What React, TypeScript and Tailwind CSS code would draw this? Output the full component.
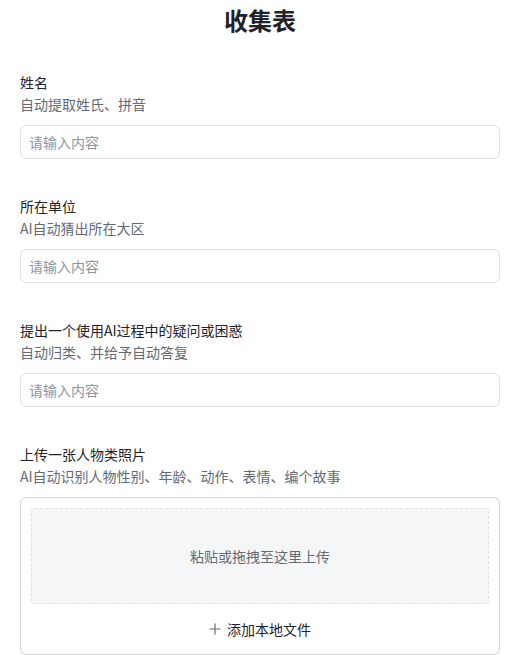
import React from "react";

const fields = [
  { label: "姓名", desc: "自动提取姓氏、拼音" },
  { label: "所在单位", desc: "AI自动猜出所在大区" },
  { label: "提出一个使用AI过程中的疑问或困惑", desc: "自动归类、并给予自动答复" },
];

export default function App() {
  return (
    <div
      className="min-h-[667px] bg-white pl-5 pr-[15px] pt-1 text-[14px] text-[#1f2329]"
      style={{ fontFamily: '"Noto Sans CJK SC", "Noto Sans", sans-serif' }}
    >
      <h1 className="text-center text-[24px] font-bold leading-[32px] text-[#1f2329]">收集表</h1>
      <div className="mt-[35px] flex flex-col gap-[36px]">
        {fields.map((f) => (
          <div key={f.label} className="flex flex-col">
            <div className="leading-[22px] text-[#1f2329]">{f.label}</div>
            <div className="leading-[22px] text-[#646a73]">{f.desc}</div>
            <input
              placeholder="请输入内容"
              className="mt-[10px] h-[34px] w-full rounded-[6px] border border-[#dee0e3] px-[8px] text-[14px] outline-none placeholder:text-[#8f959e]"
            />
          </div>
        ))}
        <div className="flex flex-col">
          <div className="leading-[22px] text-[#1f2329]">上传一张人物类照片</div>
          <div className="leading-[22px] text-[#646a73]">AI自动识别人物性别、年龄、动作、表情、编个故事</div>
          <div className="mt-[10px] rounded-[6px] border border-[#d0d3d6] px-[10px] pt-[10px]">
            <div className="flex h-[96px] items-center justify-center rounded-[4px] border border-dashed border-[#dee0e3] bg-[#f5f6f7] text-[#646a73]">
              粘贴或拖拽至这里上传
            </div>
            <div className="flex h-[50px] items-center justify-center gap-[6px] text-[#1f2329]">
              <svg width="12" height="12" viewBox="0 0 12 12" fill="none">
                <path d="M6 0.5V11.5M0.5 6H11.5" stroke="#646a73" strokeWidth="1.2" />
              </svg>
              <span>添加本地文件</span>
            </div>
          </div>
        </div>
      </div>
    </div>
  );
}
